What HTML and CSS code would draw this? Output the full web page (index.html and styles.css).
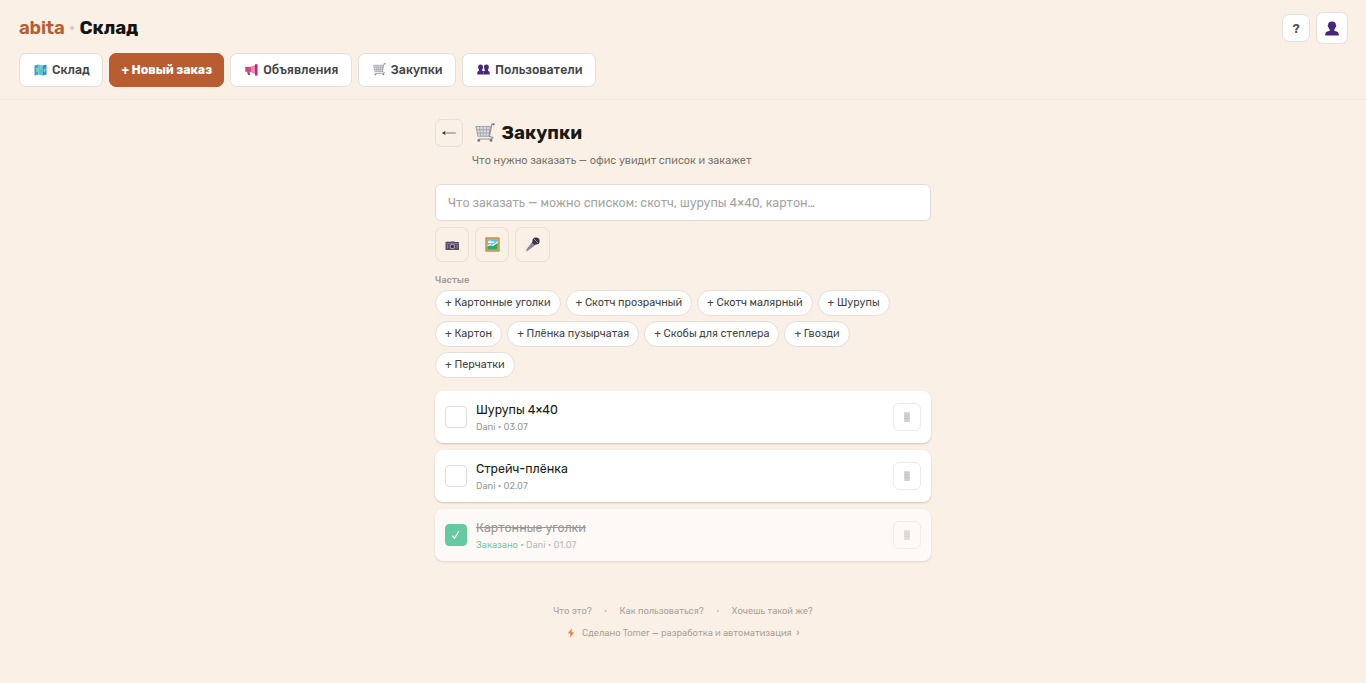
FILE: index.html
```html
<!DOCTYPE html>
<html lang="ru">
<head>
    <meta charset="UTF-8">
    <meta name="viewport" content="width=device-width, initial-scale=1.0">
    <title>abita · Склад</title>
    <link rel="stylesheet" href="styles.css">
</head>
<body>
    <!-- shared icons -->
    <svg class="sprite">
        <symbol id="i-cart" viewBox="0 0 20 20">
            <path d="M1 3.500h14.300l-1.500 9.800H3z" fill="#dcdce2" stroke="#a0a0aa" stroke-width="1.1"/>
            <path d="M4.600 3.500l.9 9.800M8.200 3.500v9.800M11.800 3.500l-.8 9.800M1.500 6.700h13.300M2.200 10h12" fill="none" stroke="#a0a0aa" stroke-width=".9"/>
            <path d="M19 1.200h-2.200L14.400 13.300l3.400 1.200-1 1.500H4" fill="none" stroke="#92929c" stroke-width="1.200"/>
            <path d="M17.600.6h2v1.500h-2z" fill="#8d5a50"/>
            <circle cx="3.800" cy="17.400" r="1.400" fill="#777784"/>
            <circle cx="16" cy="17.400" r="1.400" fill="#777784"/>
        </symbol>
        <symbol id="i-trash" viewBox="0 0 8 11">
            <path d="M1 .5h6v9.500H1z" fill="#d9d9d9"/>
            <path d="M1 1h6M3 1v9M5 2v8M1 4h6M1 6.500h6" stroke="#c2c2c2" stroke-width=".7"/>
        </symbol>
    </svg>

    <header class="header">
        <div class="top">
            <div class="brand"><span class="logo">abita</span><span class="dot">·</span><span class="section">Склад</span></div>
            <div class="top-actions">
                <button class="help">?</button>
                <button class="profile">
                    <svg width="14" height="15" viewBox="0 0 14 15"><path d="M7 .4c2.900 0 4 1.600 3.900 3.800.6.2.5 1.500-.2 1.800-.3 1.200-.8 2-1.400 2.500v1.200l3.100 1.100c1 .4 1.400 1.400 1.400 3.600H.2c0-2.200.4-3.200 1.400-3.600l3.100-1.100V8.500C4.100 8 3.600 7.200 3.300 6c-.7-.3-.8-1.600-.2-1.800C3 2 4.100.4 7 .4z" fill="#46277c"/></svg>
                </button>
            </div>
        </div>
        <nav class="nav">
            <button class="nav-btn">
                <svg width="13" height="12" viewBox="0 0 13 12"><path d="M.5 1.500l4 -1v10l-4 1z" fill="#3c9ed6"/><path d="M4.500.5l4 1v10l-4-1z" fill="#54c6c5"/><path d="M8.500 1.500l4-1v10l-4 1z" fill="#248fce"/><path d="M2 3.500l2 1v3l-1.500 1zM6 2l2 1.500-1 2-1.500-1zM9.500 5l2-1v3l-1.500 2z" fill="#79d7b5"/></svg>
                Склад
            </button>
            <button class="nav-btn primary">+ Новый заказ</button>
            <button class="nav-btn">
                <svg width="13" height="12" viewBox="0 0 13 12"><path d="M.3 2.800h4.200v5H.3z" fill="#d93b82"/><path d="M4.500 3L11 .7v9.600L4.500 7.800z" fill="#ed85ad"/><path d="M10 .2h2.500v11.300H10z" fill="#b8286c"/><path d="M2 7.500h2.500l.7 3.500H3z" fill="#8a5674"/><path d="M4.500 3h1.200v4.800H4.500z" fill="#b8286c"/></svg>
                Объявления
            </button>
            <button class="nav-btn">
                <svg width="13" height="13"><use href="#i-cart"/></svg>
                Закупки
            </button>
            <button class="nav-btn">
                <svg width="13" height="11" viewBox="0 0 13 11"><path d="M3.600.5c1.800 0 2.500 1 2.400 2.500 0 1.500-.5 2.300-.8 2.800v1l1.300.4 1.300-.4v-1C7.500 5.300 7 4.500 7 3 6.900 1.500 7.600.5 9.400.5s2.500 1 2.400 2.500c0 1.500-.5 2.300-.8 2.800v1c1.400.5 1.800 1.200 1.800 3.700H.2C.2 8 .6 7.300 2 6.800v-1c-.3-.5-.8-1.300-.8-2.800C1.100 1.500 1.800.5 3.600.5z" fill="#46277c"/><path d="M6.500 7.400v3.100" stroke="#8c74b5" stroke-width=".7"/></svg>
                Пользователи
            </button>
        </nav>
    </header>

    <main class="container">
        <div class="page-head">
            <button class="back">
                <svg width="14" height="8" viewBox="0 0 14 8"><path d="M.8 4h13" stroke="#555" stroke-width=".8"/><path d="M0 4l3.600-2.200L2.800 4l.8 2.200z" fill="#333"/></svg>
            </button>
            <h1><svg width="20" height="20"><use href="#i-cart"/></svg>Закупки</h1>
        </div>
        <p class="subtitle">Что нужно заказать — офис увидит список и закажет</p>

        <input class="order-input" type="text" placeholder="Что заказать — можно списком: скотч, шурупы 4×40, картон…">

        <div class="tools">
            <button class="tool">
                <svg width="15" height="15" viewBox="0 0 15 15"><path d="M.5 5h13.500v8H.5z" fill="#594d67"/><path d="M1.500 4.500h3V5h-3zM5.500 4.300h4V5h-4z" fill="#7b7186"/><path d="M.5 6.500H14" stroke="#857b90" stroke-width=".8"/><circle cx="7.300" cy="9.500" r="2.700" fill="#a8a0b2"/><circle cx="7.300" cy="9.500" r="1.700" fill="#3b3148"/><path d="M2.500 7.500v4M12 7.500v4" stroke="#948c9d" stroke-width=".8"/></svg>
            </button>
            <button class="tool">
                <svg width="15" height="15" viewBox="0 0 15 15"><path d="M.8.8h13.400v13.400H.8z" fill="#d2a85c" stroke="#a98142" stroke-width=".8"/><path d="M2.300 2.300h10.400v10.400H2.300z" fill="#5cc5e5"/><path d="M3 4.500c1-1.500 3-1.200 3.500 0H9v1.500H3z" fill="#e9fbff"/><path d="M2.300 8l3-1 2 1 5.400-4v8.700H2.300z" fill="#f2f5eb"/><path d="M2.300 9l3.700-.5 2 .5 4.700-3v6.700H2.300z" fill="#2fa873"/></svg>
            </button>
            <button class="tool">
                <svg width="15" height="15" viewBox="0 0 15 15"><path d="M7.500 4.500l3.200 3.200L2 14.300.8 13.200z" fill="#8b8297"/><path d="M7.600 5l2.500 2.500" stroke="#463b56" stroke-width="1.600"/><circle cx="11" cy="4" r="3.600" fill="#3c3249"/><path d="M9 2l4 4" stroke="#9f96aa" stroke-width="1"/></svg>
            </button>
        </div>

        <div class="label">Частые</div>
        <div class="chips">
            <button class="chip">+ Картонные уголки</button>
            <button class="chip">+ Скотч прозрачный</button>
            <button class="chip">+ Скотч малярный</button>
            <button class="chip">+ Шурупы</button>
            <button class="chip">+ Картон</button>
            <button class="chip">+ Плёнка пузырчатая</button>
            <button class="chip">+ Скобы для степлера</button>
            <button class="chip">+ Гвозди</button>
            <button class="chip">+ Перчатки</button>
        </div>

        <div class="list">
            <div class="item">
                <span class="check"></span>
                <div class="item-body">
                    <div class="item-name">Шурупы 4×40</div>
                    <div class="item-meta">Dani • 03.07</div>
                </div>
                <button class="delete"><svg width="8" height="11"><use href="#i-trash"/></svg></button>
            </div>
            <div class="item">
                <span class="check"></span>
                <div class="item-body">
                    <div class="item-name">Стрейч-плёнка</div>
                    <div class="item-meta">Dani • 02.07</div>
                </div>
                <button class="delete"><svg width="8" height="11"><use href="#i-trash"/></svg></button>
            </div>
            <div class="item done">
                <span class="check"><svg width="10" height="10" viewBox="0 0 10 10"><path d="M1.500 5.600l2 2.700L7.900 1" fill="none" stroke="#fff" stroke-width="1.200"/></svg></span>
                <div class="item-body">
                    <div class="item-name">Картонные уголки</div>
                    <div class="item-meta"><span class="ordered">Заказано •</span> Dani • 01.07</div>
                </div>
                <button class="delete"><svg width="8" height="11"><use href="#i-trash"/></svg></button>
            </div>
        </div>
    </main>

    <footer class="footer">
        <div class="links">
            <a>Что это?</a><span class="sep">·</span><a>Как пользоваться?</a><span class="sep">·</span><a>Хочешь такой же?</a>
        </div>
        <div class="credit">
            <svg width="8" height="10" viewBox="0 0 8 10"><path d="M5 .2L.8 5.600h2.700L2.800 9.800 7.200 4.200H4.400z" fill="#e8813f"/></svg>
            <span>Сделано Tomer — разработка и автоматизация</span>
            <span class="arrow">›</span>
        </div>
    </footer>
</body>
</html>
```
FILE: styles.css
```css
* {
    box-sizing: border-box;
}

body {
    margin: 0;
    background: #faf0e6;
    color: #1a1a14;
    font-family: Rubik, Inter, "Noto Sans", sans-serif;
    font-size: 12.4px;
}

button {
    display: flex;
    align-items: center;
    justify-content: center;
    padding: 0;
    font-family: inherit;
    background: #fff;
    border: 1px solid #e3dfdb;
    cursor: pointer;
}

svg {
    flex: none;
}

.sprite {
    display: none;
}

.header {
    height: 100px;
    padding: 12px 18px 0 19px;
    border-bottom: 1px solid #f4eae1;
}

.top {
    display: flex;
    justify-content: space-between;
    align-items: center;
    height: 32px;
}

.brand {
    display: flex;
    align-items: center;
    font-size: 18.6px;
    font-weight: 700;
    line-height: 32px;
}

.logo {
    color: #b85c32;
    font-weight: 600;
    letter-spacing: -0.2px;
}

.dot {
    width: 15px;
    text-align: center;
    color: #d5ccc4;
    font-weight: 400;
}

.section {
    color: #14140f;
    letter-spacing: -0.1px;
}

.top-actions {
    display: flex;
    align-items: center;
    gap: 6px;
}

.help {
    width: 28px;
    height: 28px;
    border-radius: 7px;
    color: #555;
    font-size: 12.4px;
    font-weight: 600;
}

.profile {
    width: 32px;
    height: 32px;
    border-radius: 7px;
}

.nav {
    display: flex;
    gap: 6.2px;
    margin-top: 9px;
}

.nav-btn {
    gap: 5px;
    height: 34px;
    padding: 0 12.4px 1px 14px;
    border-radius: 7px;
    color: #444;
    font-size: 12.4px;
    font-weight: 500;
}

.nav-btn.primary {
    padding: 0 11px 1px;
    background: #b85c32;
    border-color: #b85c32;
    color: #fff;
    font-weight: 700;
    letter-spacing: -0.05px;
}

.container {
    width: 496px;
    margin: 19px auto 0;
}

.page-head {
    display: flex;
    align-items: center;
    gap: 12px;
    height: 28px;
}

.back {
    width: 28px;
    height: 28px;
    border-radius: 6px;
    background: transparent;
}

h1 {
    display: flex;
    align-items: center;
    gap: 6.500px;
    margin: -1px 0 0;
    font-size: 18.6px;
    font-weight: 700;
}

.subtitle {
    margin: 6px 0 0 37px;
    font-size: 10.85px;
    line-height: 16px;
    color: #7b766b;
}

.order-input {
    display: block;
    width: 100%;
    height: 37px;
    margin-top: 15px;
    padding: 0 12px;
    border: 1px solid #e1dcda;
    border-radius: 6px;
    background: #fff;
    font-family: inherit;
    font-size: 12.4px;
}

.order-input::placeholder {
    color: #a3a3a0;
}

.tools {
    display: flex;
    gap: 6px;
    margin-top: 6px;
}

.tool {
    width: 34.2px;
    height: 35px;
    border-color: #e8dfd6;
    border-radius: 7px;
    background: transparent;
}

.label {
    margin-top: 11px;
    font-size: 9.3px;
    font-weight: 500;
    line-height: 14px;
    color: #a39d95;
}

.chips {
    display: flex;
    flex-wrap: wrap;
    gap: 5px;
    margin-top: 3px;
}

.chip {
    height: 26px;
    padding: 0 9px 1px;
    border-radius: 13px;
    color: #444;
    font-size: 10.85px;
}

.list {
    display: flex;
    flex-direction: column;
    gap: 7px;
    margin-top: 13px;
}

.item {
    display: flex;
    align-items: center;
    gap: 9px;
    height: 52px;
    padding: 0 10px;
    border-radius: 8px;
    background: #fff;
    box-shadow: 0 1px 2px rgba(0, 0, 0, 0.18);
}

.item.done {
    opacity: 0.65;
}

.check {
    display: flex;
    align-items: center;
    justify-content: center;
    width: 22px;
    height: 22px;
    border: 1px solid #dedede;
    border-radius: 4px;
}

.done .check {
    background: #16b67b;
    border-color: #16b67b;
}

.item-body {
    flex: 1;
}

.item-name {
    font-size: 12.4px;
    line-height: 18px;
}

.done .item-name {
    color: #666;
    text-decoration: line-through;
}

.item-meta {
    margin-top: 1px;
    font-size: 9.3px;
    line-height: 14px;
    color: #999;
}

.ordered {
    color: #16b67b;
}

.delete {
    width: 28px;
    height: 28px;
    border-color: #ebebeb;
    border-radius: 6px;
}

.footer {
    margin-top: 42px;
    font-size: 9.3px;
    line-height: 16px;
    color: #aaa298;
}

.links,
.credit {
    display: flex;
    justify-content: center;
    align-items: center;
}

.links {
    gap: 12.4px;
}

.sep {
    color: #cfc6bc;
}

.credit {
    gap: 7.500px;
    margin-top: 6px;
}

.arrow {
    margin-left: -3px;
}
```
